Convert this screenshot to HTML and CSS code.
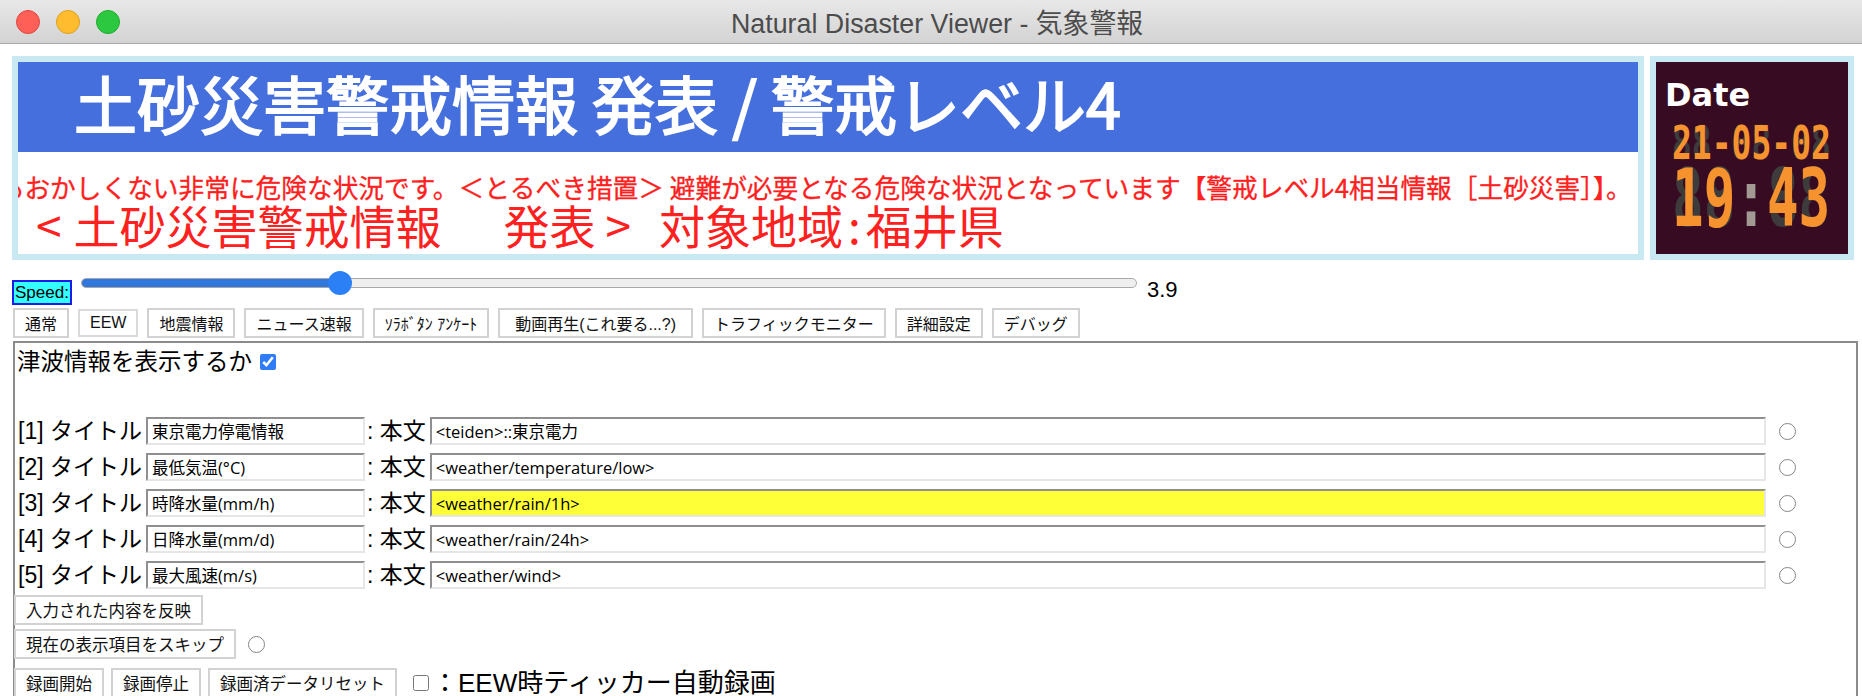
FILE: index.html
```html
<!DOCTYPE html>
<html lang="ja">
<head>
<meta charset="utf-8">
<title>Natural Disaster Viewer - 気象警報</title>
<link rel="stylesheet" href="styles.css">
</head>
<body>
<header class="titlebar">
  <div class="lights"><span class="light red"></span><span class="light yellow"></span><span class="light green"></span></div>
  <div class="title">Natural Disaster Viewer - 気象警報</div>
  <div></div>
</header>
<main class="page">
  <section class="banner-row">
    <div class="banner">
      <div class="banner-inner">
        <div class="headline">土砂災害警戒情報 発表 / 警戒レベル4</div>
        <div class="ticker">発生してもおかしくない非常に危険な状況です。＜とるべき措置＞ 避難が必要となる危険な状況となっています【警戒レベル4相当情報［土砂災害］】。</div>
        <div class="subline"><span class="br-open">&lt;</span>土砂災害警戒情報<span class="wide-gap">　</span>発表<span class="br-close">&gt;</span>対象地域<span class="colon-sp">:</span>福井県</div>
      </div>
    </div>
    <div class="clock">
      <div class="clock-inner">
        <div class="clock-label">Date</div>
        <div class="seg seg-date"><span class="lit">21-05-02</span></div>
        <div class="seg seg-time"><span class="lit">19<span class="colon">:</span>43</span></div>
      </div>
    </div>
  </section>

  <section class="speed-row">
    <span class="speed-label">Speed:</span>
    <input class="speed-range" type="range" min="0.1" max="16" step="0.1" value="3.9">
    <span class="speed-value">3.9</span>
  </section>

  <nav class="tabs">
    <button class="tab">通常</button>
    <button class="tab tab-active">EEW</button>
    <button class="tab">地震情報</button>
    <button class="tab">ニュース速報</button>
    <button class="tab">ｿﾗﾎﾞﾀﾝ ｱﾝｹｰﾄ</button>
    <button class="tab tab-wide">動画再生(これ要る...?)</button>
    <button class="tab">トラフィックモニター</button>
    <button class="tab">詳細設定</button>
    <button class="tab">デバッグ</button>
  </nav>

  <section class="panel">
    <div class="tsunami-line">津波情報を表示するか<input class="check-blue" type="checkbox" checked></div>

    <div class="fields">
      <div class="field-row">
        <span class="field-label">[1] タイトル</span><input class="in-title" type="text" value="東京電力停電情報"><span class="field-sep">: 本文</span><input class="in-body" type="text" value="&lt;teiden&gt;::東京電力"><input class="radio" type="radio" name="sel">
      </div>
      <div class="field-row">
        <span class="field-label">[2] タイトル</span><input class="in-title" type="text" value="最低気温(°C)"><span class="field-sep">: 本文</span><input class="in-body" type="text" value="&lt;weather/temperature/low&gt;"><input class="radio" type="radio" name="sel">
      </div>
      <div class="field-row">
        <span class="field-label">[3] タイトル</span><input class="in-title" type="text" value="時降水量(mm/h)"><span class="field-sep">: 本文</span><input class="in-body in-current" type="text" value="&lt;weather/rain/1h&gt;"><input class="radio" type="radio" name="sel">
      </div>
      <div class="field-row">
        <span class="field-label">[4] タイトル</span><input class="in-title" type="text" value="日降水量(mm/d)"><span class="field-sep">: 本文</span><input class="in-body" type="text" value="&lt;weather/rain/24h&gt;"><input class="radio" type="radio" name="sel">
      </div>
      <div class="field-row">
        <span class="field-label">[5] タイトル</span><input class="in-title" type="text" value="最大風速(m/s)"><span class="field-sep">: 本文</span><input class="in-body" type="text" value="&lt;weather/wind&gt;"><input class="radio" type="radio" name="sel">
      </div>
    </div>

    <div class="action-row first"><button class="btn">入力された内容を反映</button></div>
    <div class="action-row second"><button class="btn">現在の表示項目をスキップ</button><input class="radio skip-radio" type="radio" name="skip"></div>
    <div class="action-row third">
      <button class="btn">録画開始</button>
      <button class="btn">録画停止</button>
      <button class="btn">録画済データリセット</button>
      <input class="check-plain" type="checkbox">
      <span class="rec-label">：EEW時ティッカー自動録画</span>
    </div>
  </section>
</main>
</body>
</html>
```

FILE: styles.css
```css
* { box-sizing: border-box; }
html, body { margin: 0; padding: 0; background: #fff; }
body {
  width: 1862px;
  height: 696px;
  overflow: hidden;
  font-family: "Liberation Sans", "Noto Sans CJK JP", sans-serif;
  color: #000;
}

/* window title bar */
.titlebar {
  height: 44px;
  display: grid;
  grid-template-columns: 1fr auto 1fr;
  align-items: center;
  background: linear-gradient(#e8e8e8, #d3d3d3);
  border-bottom: 1px solid #ababab;
}
.lights { display: flex; gap: 16px; padding-left: 16px; }
.light { width: 24px; height: 24px; border-radius: 50%; }
.red { background: #fe5f57; border: 1px solid #e2463f; }
.yellow { background: #febc2e; border: 1px solid #e0a019; }
.green { background: #2bc840; border: 1px solid #1fae2c; }
.title { font-size: 26.8px; color: #4c4c4c; white-space: nowrap; padding-left: 12px; }

.page { padding: 12px 8px 0 12px; }

/* banner */
.banner-row { display: flex; gap: 6px; }
.banner { flex: 1; border: 6px solid #c9e9f2; min-width: 0; }
.banner-inner { height: 192px; background: #fff; }
.headline {
  height: 90px;
  background: #446fdc;
  color: #fff;
  font-family: "Noto Sans CJK JP", sans-serif;
  font-size: 63px;
  line-height: 80px;
  padding-left: 56px;
  white-space: nowrap;
  -webkit-text-stroke: 1.8px #fff;
}
.ticker {
  margin-top: 20px;
  height: 30px;
  font-family: "Noto Sans CJK JP", sans-serif;
  font-size: 25.7px;
  line-height: 30px;
  color: #ff2020;
  white-space: nowrap;
  overflow: hidden;
  text-indent: -120px;
  -webkit-text-stroke: 0.3px #ff2020;
}
.subline {
  font-family: "Noto Sans CJK JP", sans-serif;
  font-size: 46px;
  line-height: 44px;
  height: 44px;
  color: #ff2020;
  padding-left: 18px;
  white-space: nowrap;
}
.subline span { display: inline-block; line-height: 44px; vertical-align: top; }
.br-open { margin-right: 12px; }
.wide-gap { letter-spacing: 16px; }
.br-close { margin: 0 28px 0 10px; }
.colon-sp { margin: 0 5px; }

/* clock */
.clock { width: 204px; flex: none; border: 6px solid #c9e9f2; }
.clock-inner {
  height: 192px;
  background: #370c22;
  padding: 14px 0 0 9px;
  overflow: hidden;
}
.clock-label {
  font-family: "DejaVu Sans", sans-serif;
  font-weight: 700;
  font-size: 32px;
  line-height: 38px;
  color: #fff;
}
.seg {
  display: grid;
  font-family: "DejaVu Sans Mono", monospace;
  font-weight: 700;
  white-space: nowrap;
  transform-origin: left top;
  width: max-content;
}
.seg::before { grid-area: 1 / 1; color: #3d3b3b; }
.seg > span { grid-area: 1 / 1; }
.seg-date::before { content: "88-88-88"; }
.seg-time::before { content: "88:88"; }
.lit { color: #f7932f; }
.colon { color: #a39a94; }
.seg-date {
  font-size: 46.6px;
  line-height: 34px;
  height: 34px;
  margin: 12px 0 0 7px;
  transform: scaleX(0.708);
}
.seg-time {
  font-size: 79.6px;
  line-height: 58px;
  height: 58px;
  margin: 10px 0 0 7px;
  transform: scaleX(0.66);
}

/* speed */
.speed-row { display: flex; align-items: flex-start; height: 48px; padding-top: 11px; }
.speed-label {
  margin-top: 9px;
  font-size: 17px;
  line-height: 21px;
  padding: 0 1px;
  background: #33ffff;
  border: 2px solid #1c1ce8;
}
.speed-range {
  -webkit-appearance: none;
  appearance: none;
  margin: 0 0 0 9px;
  width: 1056px;
  height: 24px;
  background: transparent;
}
.speed-range::-webkit-slider-runnable-track {
  height: 10px;
  border-radius: 5px;
  border: 1px solid #a8a8a8;
  background: linear-gradient(to right, #3177dc 0, #3177dc 24.3%, #efefef 24.3%, #efefef 100%);
}
.speed-range::-webkit-slider-thumb {
  -webkit-appearance: none;
  appearance: none;
  width: 24px;
  height: 24px;
  border-radius: 50%;
  background: #2b80f5;
  margin-top: -8px;
}
.speed-value { margin: 7px 0 0 10px; font-size: 22px; line-height: 24px; }

/* tabs + buttons */
.tabs { display: flex; gap: 9px; height: 30px; padding-left: 1px; }
.tab, .btn {
  height: 30px;
  padding: 0 10px;
  border: 2px solid #d2d2d2;
  border-radius: 0;
  background: #fff;
  font-family: "Liberation Sans", "Noto Sans CJK JP", sans-serif;
  font-size: 16px;
  color: #111;
  white-space: nowrap;
}
.btn { font-size: 16.5px; }
.tab-active { height: 28px; margin-top: 1px; border-color: #dadada; }
.tab-wide { padding: 0 15px; }

/* panel */
.panel {
  margin: 3px -4px 0 1px;
  height: 360px;
  border: 2px solid #8b8b8b;
  border-bottom: none;
  padding: 5px 0 0 2px;
}
.tsunami-line {
  display: flex;
  align-items: center;
  height: 28px;
  font-size: 23.5px;
  line-height: 28px;
}
.check-blue {
  width: 16px;
  height: 16px;
  margin: 0 0 0 8px;
  accent-color: #2f7cf6;
}
.fields { margin-top: 37px; }
.field-row { display: flex; align-items: center; height: 36px; white-space: nowrap; }
.field-label { font-size: 23px; line-height: 28px; padding-left: 1px; }
.field-sep { font-size: 23px; line-height: 28px; margin-left: 2px; }
.in-title, .in-body {
  height: 28px;
  margin: 0 0 0 4px;
  padding: 0 4px;
  border-style: solid;
  border-width: 2px;
  border-color: #8f8f8f #e6e6e6 #e6e6e6 #8f8f8f;
  background: #fff;
  font-family: "Open Sans", "Noto Sans CJK JP", sans-serif;
  font-size: 16.5px;
  color: #000;
  outline: none;
}
.in-title { width: 219px; }
.in-body { width: 1336px; }
.in-current { background: #ffff38; }
.radio {
  -webkit-appearance: none;
  appearance: none;
  width: 17px;
  height: 17px;
  margin: 0 0 0 13px;
  border: 1.5px solid #858585;
  border-radius: 50%;
  background: #fff;
}

.action-row { display: flex; align-items: center; margin-left: -3px; }
.action-row.first { margin-top: 2px; }
.action-row.second { margin-top: 4px; }
.action-row.third { margin-top: 9px; gap: 7px; }
.skip-radio { margin-left: 12px; }
.check-plain {
  width: 16px;
  height: 16px;
  margin: 0 0 0 9px;
}
.rec-label { font-size: 26px; line-height: 28px; margin-left: -4px; }
```
